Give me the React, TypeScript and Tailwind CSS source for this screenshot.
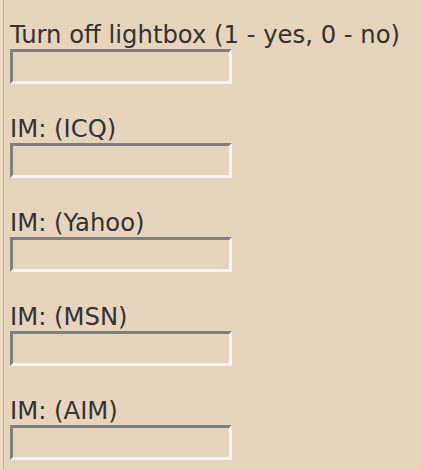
import React from 'react';

const fields = [
  'Turn off lightbox (1 - yes, 0 - no)',
  'IM: (ICQ)',
  'IM: (Yahoo)',
  'IM: (MSN)',
  'IM: (AIM)',
];

export default function App() {
  return (
    <div className="flex min-h-[470px] w-[421px] overflow-hidden bg-[#e6d4bc] font-['DejaVu_Sans',sans-serif] text-[#333333]">
      <div className="w-[1px] shrink-0" />
      <div className="w-[1px] shrink-0 bg-[#f3e8da]" />
      <div className="w-[1px] shrink-0" />
      <div className="w-[1px] shrink-0 bg-[#c9b59b]" />
      <div className="flex flex-col gap-[31px] pl-[6px] pt-[21px]">
        {fields.map((label) => (
          <div key={label} className="flex flex-col">
            <label className="whitespace-nowrap text-[24.3px] leading-[28px]">{label}</label>
            <input
              type="text"
              className="h-[35px] w-[222px] border-[3px] border-t-[#808080] border-l-[#808080] border-b-[#f8f6f2] border-r-[#f8f6f2] bg-transparent outline-none"
            />
          </div>
        ))}
      </div>
    </div>
  );
}
